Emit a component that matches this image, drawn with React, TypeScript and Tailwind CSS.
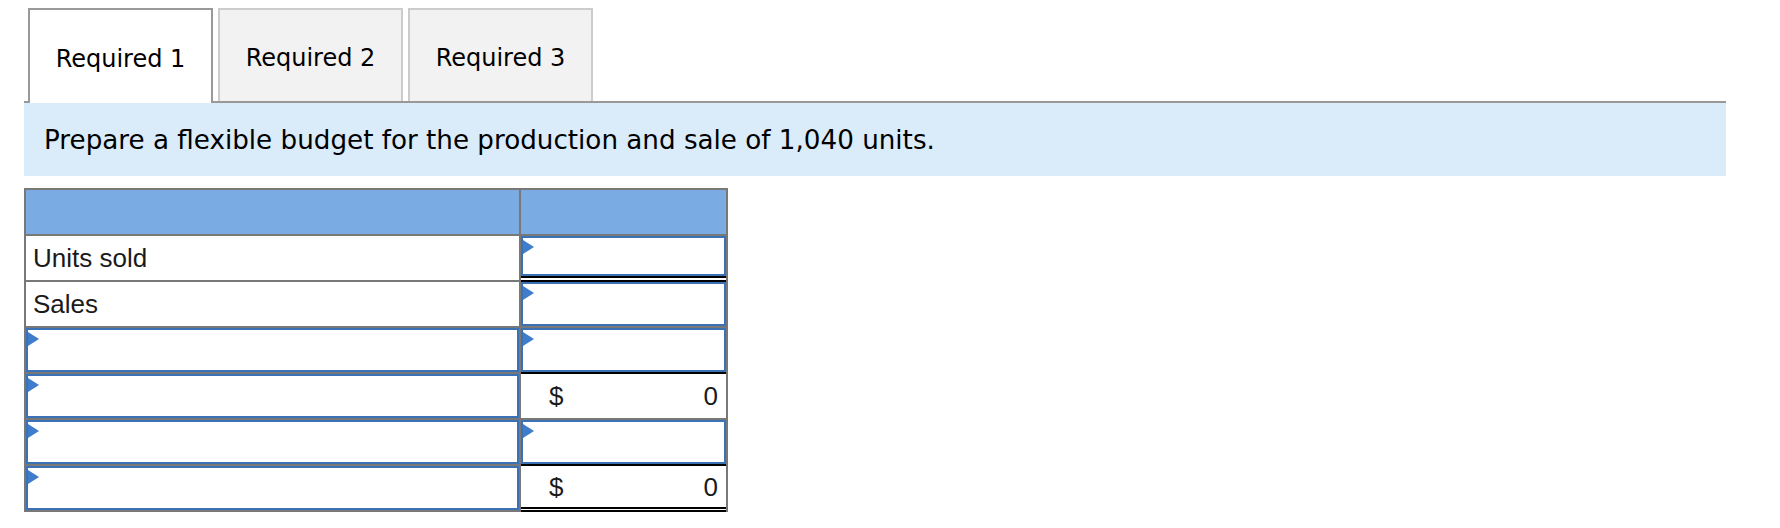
import React from 'react';

type RightCell = 'input' | 'inputDouble' | 'total' | 'grandTotal';

interface Row {
  label?: string;
  right: RightCell;
}

const rows: Row[] = [
  { label: 'Units sold', right: 'inputDouble' },
  { label: 'Sales', right: 'input' },
  { right: 'input' },
  { right: 'total' },
  { right: 'input' },
  { right: 'grandTotal' },
];

const Marker = () => (
  <svg className="absolute left-0 top-[2px]" width="11" height="14" viewBox="0 0 11 14">
    <polygon points="0,0 11,7 0,14" fill="#3d7dcc" />
  </svg>
);

const InputBox = ({ className = '' }: { className?: string }) => (
  <div className={`relative flex-1 bg-white border-2 border-[#3b72b6] ${className}`}>
    <Marker />
  </div>
);

const tabs = ['Required 1', 'Required 2', 'Required 3'];

export default function App() {
  return (
    <div className="w-[1780px] h-[528px] bg-white pt-[8px] pl-[24px]" style={{ fontFamily: '"DejaVu Sans", Verdana, sans-serif' }}>
      <div className="w-[1702px]">
        {/* Tabs */}
        <div className="flex items-end gap-[5px] pl-[4px] border-b-2 border-[#999999]">
          {tabs.map((t, i) =>
            i === 0 ? (
              <div
                key={t}
                className="relative z-10 -mb-[2px] w-[185px] h-[95px] flex items-center justify-center bg-white border-2 border-b-0 border-[#999999] text-[24px] text-black pt-[4px]"
              >
                {t}
              </div>
            ) : (
              <div
                key={t}
                className="w-[185px] h-[93px] flex items-center justify-center bg-[#f2f2f2] border-2 border-b-0 border-[#cccccc] text-[24px] text-black pt-[4px]"
              >
                {t}
              </div>
            )
          )}
        </div>

        {/* Instruction band */}
        <div className="h-[73px] bg-[#daebf9] flex items-center pl-[20px] pt-[3px] text-[26.2px] text-black">
          Prepare a flexible budget for the production and sale of 1,040 units.
        </div>
      </div>

      {/* Budget table */}
      <div
        className="mt-[12px] w-[704px] grid grid-cols-[493px_205px] auto-rows-[44px] gap-[2px] p-[2px] bg-[#787878] text-[26px] text-[#1a1a1a]"
        style={{ fontFamily: '"Liberation Sans", Arial, sans-serif' }}
      >
        <div className="bg-[#7aace3]" />
        <div className="bg-[#7aace3]" />

        {rows.map((r, i) => (
          <React.Fragment key={i}>
            {r.label ? (
              <div className="bg-white flex items-center pl-[7px] pt-[1px]">{r.label}</div>
            ) : (
              <div className="bg-white flex">
                <InputBox />
              </div>
            )}

            {r.right === 'input' && (
              <div className="bg-white flex">
                <InputBox />
              </div>
            )}
            {r.right === 'inputDouble' && (
              <div className="bg-white flex flex-col -mb-[2px]">
                <InputBox />
                <div className="h-[6px] border-y-2 border-black bg-white" />
              </div>
            )}
            {r.right === 'total' && (
              <div className="bg-white -mt-[2px] border-t-2 border-black flex items-center justify-between pl-[28px] pr-[8px]">
                <span>$</span>
                <span>0</span>
              </div>
            )}
            {r.right === 'grandTotal' && (
              <div className="bg-white -mt-[2px] -mb-[2px] border-t-2 border-black flex flex-col">
                <div className="flex-1 flex items-center justify-between pl-[28px] pr-[8px] pt-[2px]">
                  <span>$</span>
                  <span>0</span>
                </div>
                <div className="h-[7px] border-y-2 border-black bg-white" />
              </div>
            )}
          </React.Fragment>
        ))}
      </div>
    </div>
  );
}
